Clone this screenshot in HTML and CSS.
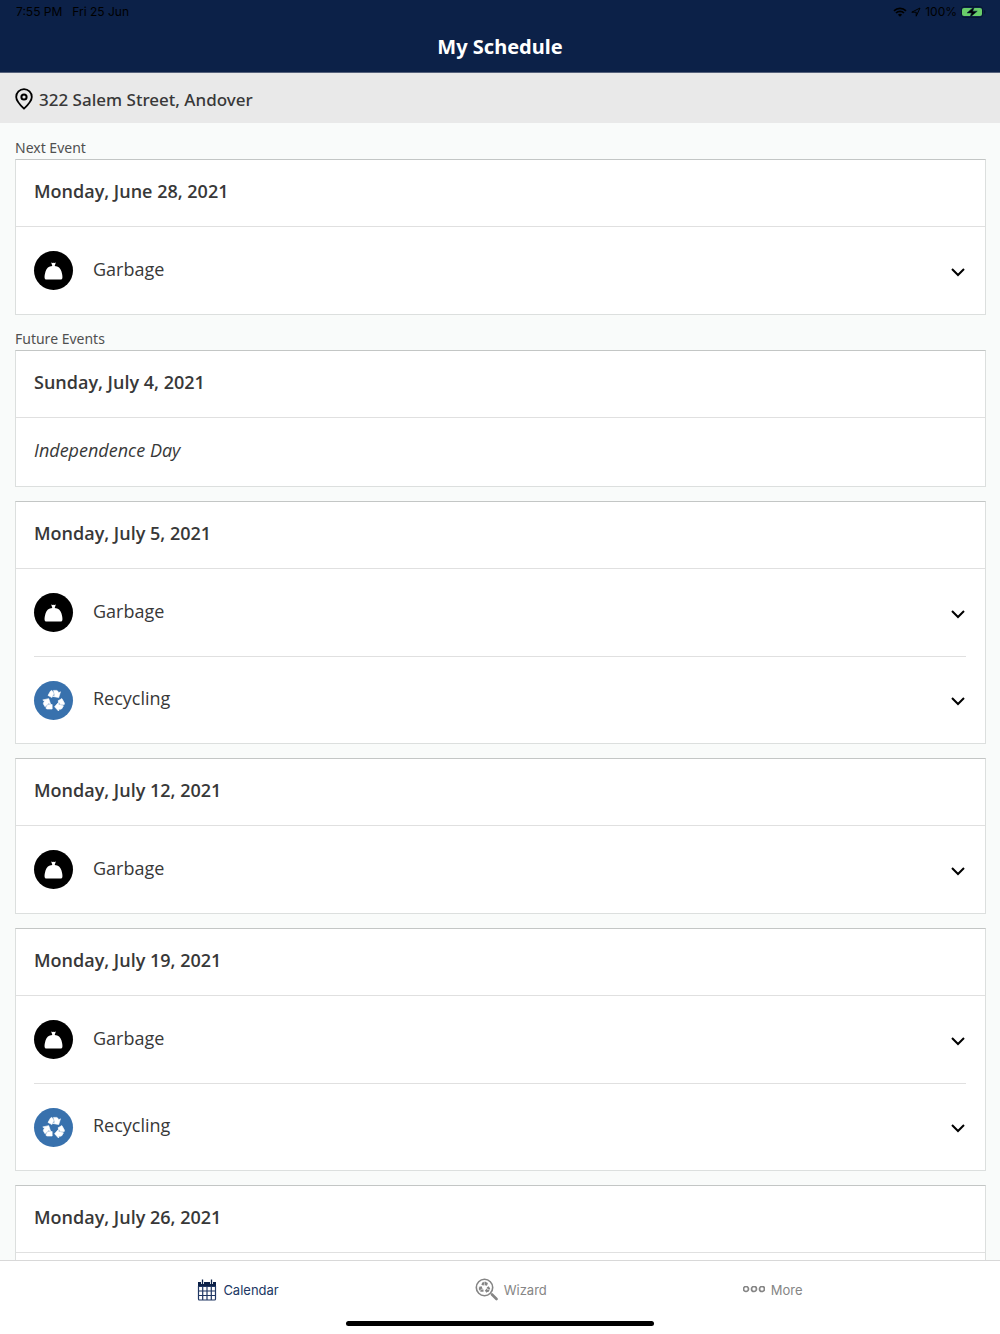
FILE: index.html
```html
<!DOCTYPE html>
<html lang="en">
<head>
<meta charset="utf-8">
<meta name="viewport" content="width=device-width, initial-scale=1">
<title>My Schedule</title>
<link rel="stylesheet" href="styles.css">
</head>
<body>
<svg class="sprite" aria-hidden="true">
  <symbol id="bag" viewBox="0 0 40 40">
    <path d="M17.600 11.300l1.600.4.800-.2.800.2 1.600-.4-1.200 3.600c3.800.3 5.900 2.200 6.900 5.400.8 2.800 1.300 5.300 1 7-.2 1.100-.9 1.500-1.900 1.500H12.800c-1 0-1.700-.4-1.900-1.500-.3-1.700.2-4.200 1-7 1-3.200 3.100-5.100 6.900-5.400z"/>
  </symbol>
  <symbol id="recycle" viewBox="0 0 24 22">
    <g id="arrow"><path d="M6 6.400L8.500 2.100Q9 1.400 10 1.400L11.900 4.600 9.900 8.600z"/><path d="M11.500 1.400H14.500Q15.300 1.400 15.700 2.100L16.700 3.800 18.500 2.800 16.700 8.600 10.800 7.400 12.800 6.200z"/></g>
    <use href="#arrow" transform="rotate(120 12 12)"/>
    <use href="#arrow" transform="rotate(240 12 12)"/>
  </symbol>
  <symbol id="chevron" viewBox="0 0 16 16">
    <path d="M2 6l6 6 6-6" fill="none" stroke="#000" stroke-width="2"/>
  </symbol>
</svg>

<header class="top">
  <div class="status">
    <span>7:55 PM</span>
    <span>Fri 25 Jun</span>
    <span class="status-right">
      <svg width="14" height="10" viewBox="0 0 14 10"><path d="M1 3.900a8.600 8.600 0 0 1 12 0M3 6a5.700 5.700 0 0 1 8 0" fill="none" stroke="#000" stroke-width="1.700"/><path d="M7 9.800L4.900 7.700a3 3 0 0 1 4.200 0z"/></svg>
      <svg width="10" height="10" viewBox="0 0 10 10"><path d="M.8 5.200L9 1 5.200 9.200V5.200z" fill="none" stroke="#000"/></svg>
      <span>100%</span>
      <svg width="25" height="12" viewBox="0 0 25 12"><rect x=".5" y=".5" width="21" height="11" rx="3" fill="none" stroke="#06152f"/><rect x="1" y="2" width="20" height="8" rx="2" fill="#69cd69"/><path d="M23 4v4q1.500-.6 1.500-2T23 4z" fill="#06152f"/><path d="M13.500.5L6 6.900h4.500L8.800 11.500 16.200 5.200h-4.500z" stroke="#0c2148" stroke-width=".6"/></svg>
    </span>
  </div>
  <h1 class="title">My Schedule</h1>
</header>

<div class="address">
  <svg width="18" height="22" viewBox="0 0 18 22" fill="none" stroke="#000" stroke-width="2"><path d="M9 20.600C5 16.800 1.200 13.100 1.200 8.900a7.800 7.800 0 0 1 15.600 0c0 4.200-3.800 7.900-7.800 11.700z" stroke-width="1.800"/><circle cx="9" cy="9" r="2.600"/></svg>
  <span>322 Salem Street, Andover</span>
</div>

<main class="content">
  <h2 class="label">Next Event</h2>
  <section class="card">
    <h3 class="date">Monday, June 28, 2021</h3>
    <button class="event" aria-expanded="false"><span class="badge garbage"><svg width="40" height="40"><use href="#bag"/></svg></span><span class="name">Garbage</span><svg class="chevron"><use href="#chevron"/></svg></button>
  </section>

  <h2 class="label">Future Events</h2>
  <section class="card">
    <h3 class="date">Sunday, July 4, 2021</h3>
    <p class="holiday">Independence Day</p>
  </section>
  <section class="card">
    <h3 class="date">Monday, July 5, 2021</h3>
    <button class="event" aria-expanded="false"><span class="badge garbage"><svg width="40" height="40"><use href="#bag"/></svg></span><span class="name">Garbage</span><svg class="chevron"><use href="#chevron"/></svg></button>
    <button class="event" aria-expanded="false"><span class="badge recycling"><svg width="24" height="22"><use href="#recycle"/></svg></span><span class="name">Recycling</span><svg class="chevron"><use href="#chevron"/></svg></button>
  </section>
  <section class="card">
    <h3 class="date">Monday, July 12, 2021</h3>
    <button class="event" aria-expanded="false"><span class="badge garbage"><svg width="40" height="40"><use href="#bag"/></svg></span><span class="name">Garbage</span><svg class="chevron"><use href="#chevron"/></svg></button>
  </section>
  <section class="card">
    <h3 class="date">Monday, July 19, 2021</h3>
    <button class="event" aria-expanded="false"><span class="badge garbage"><svg width="40" height="40"><use href="#bag"/></svg></span><span class="name">Garbage</span><svg class="chevron"><use href="#chevron"/></svg></button>
    <button class="event" aria-expanded="false"><span class="badge recycling"><svg width="24" height="22"><use href="#recycle"/></svg></span><span class="name">Recycling</span><svg class="chevron"><use href="#chevron"/></svg></button>
  </section>
  <section class="card">
    <h3 class="date">Monday, July 26, 2021</h3>
    <div class="pending"></div>
  </section>
</main>

<footer class="bottom">
  <nav class="tabs">
    <a class="tab active" href="#calendar">
      <svg width="20" height="22" viewBox="0 0 20 22"><path d="M1 3h18v4.500H1z" fill="#0c2148"/><path d="M1.500 7.500h17v12.500a1 1 0 0 1-1 1h-15a1 1 0 0 1-1-1zM5.700 7v14M10 7v14M14.300 7v14M1 12h18M1 16.500h18" fill="none" stroke="#203763" stroke-width="1.200"/><path d="M5.500 1v4M14.500 1v4" stroke="#fff" stroke-width="3"/><path d="M5.500 .5v4.500M14.500 .5v4.500" stroke="#0c2148" stroke-width="1.300"/></svg>
      <span>Calendar</span>
    </a>
    <a class="tab" href="#wizard">
      <svg width="23" height="24" viewBox="0 0 23 24" fill="#858585"><circle cx="9.500" cy="9.500" r="8.200" fill="none" stroke="#858585" stroke-width="1.600"/><use href="#recycle" x="3" y="3" width="13" height="12"/><path d="M17 16.500l4.500 4.500" stroke="#858585" stroke-width="2.600" stroke-linecap="round"/></svg>
      <span>Wizard</span>
    </a>
    <a class="tab" href="#more">
      <svg width="22" height="8" viewBox="1 1 22 8" fill="none" stroke="#858585" stroke-width="1.700"><circle cx="4" cy="4" r="2.500"/><circle cx="12" cy="4" r="2.500"/><circle cx="20" cy="4" r="2.500"/></svg>
      <span>More</span>
    </a>
  </nav>
  <div class="home-bar"></div>
</footer>
</body>
</html>
```
FILE: styles.css
```css
* { box-sizing: border-box; }

body {
  margin: 0;
  height: 100vh;
  display: flex;
  flex-direction: column;
  background: #f9fbfa;
  color: #383838;
  font-family: "Noto Sans", "Open Sans", sans-serif;
}

h1, h2, h3, p { margin: 0; }

.sprite { display: none; }

.top {
  flex: none;
  background: #0c2148;
  border-bottom: 1px solid #56627c;
  height: 73px;
}

.status {
  display: flex;
  align-items: center;
  gap: 10px;
  height: 24px;
  padding: 0 14px 0 16px;
  color: #000;
  font: 400 12px/24px Inter, sans-serif;
}

.status-right {
  display: flex;
  align-items: center;
  gap: 4px;
  margin-left: auto;
}

.title {
  color: #fff;
  font-size: 20px;
  font-weight: 700;
  line-height: 46px;
  text-align: center;
}

.address {
  flex: none;
  display: flex;
  align-items: center;
  gap: 6px;
  height: 50px;
  padding: 2px 15px 0;
  background: #e9e9e9;
  font-size: 17px;
  font-weight: 500;
}

.content {
  flex: 1;
  min-height: 0;
  overflow-y: auto;
  scrollbar-width: none;
  padding: 14px 14px 0 15px;
}

.label {
  color: #505050;
  font-size: 14px;
  font-weight: 400;
  line-height: 22px;
}

.card + .label { margin-top: -1px; }

.card {
  margin-bottom: 14px;
  background: #fff;
  border: 1px solid #dcdfde;
  border-top-color: #c3c6c5;
}

.date {
  height: 67px;
  padding: 0 18px;
  border-bottom: 1px solid #e0e0e0;
  font-family: "Open Sans", sans-serif;
  font-size: 18px;
  font-weight: 600;
  line-height: 62px;
}

.holiday {
  height: 68px;
  padding: 0 18px;
  font-family: "Open Sans", sans-serif;
  font-size: 18px;
  font-style: italic;
  line-height: 64px;
}

.event {
  display: flex;
  align-items: center;
  width: calc(100% - 37px);
  height: 87px;
  margin: 0 19px 0 18px;
  padding: 0;
  border: 0;
  background: none;
  color: inherit;
  font-family: "Open Sans", sans-serif;
  font-size: 18px;
  text-align: left;
}

.event + .event { border-top: 1px solid #e0e0e0; }

.badge {
  display: flex;
  align-items: center;
  justify-content: center;
  flex: none;
  width: 39px;
  height: 39px;
  border-radius: 50%;
  fill: #fff;
}

.garbage { background: #000; }
.recycling { background: #3871ad; }
.recycling svg { stroke: #fff; stroke-width: 0.6px; }

.name {
  flex: 1;
  padding: 0 0 4px 20px;
}

.chevron {
  width: 16px;
  height: 16px;
}

.pending { height: 87px; }

.bottom {
  flex: none;
  height: 74px;
  background: #fff;
  border-top: 1px solid #d8d8d8;
}

.tabs {
  display: flex;
  justify-content: center;
  gap: 196px;
  margin-bottom: 2px;
}

.tab {
  display: flex;
  align-items: center;
  gap: 6px;
  height: 58px;
  color: #858585;
  font: 400 13px/20px Inter, sans-serif;
  text-decoration: none;
}

.active { color: #203763; }

.home-bar {
  width: 308px;
  height: 5px;
  margin: 0 auto;
  border-radius: 3px;
  background: #000;
}
```
